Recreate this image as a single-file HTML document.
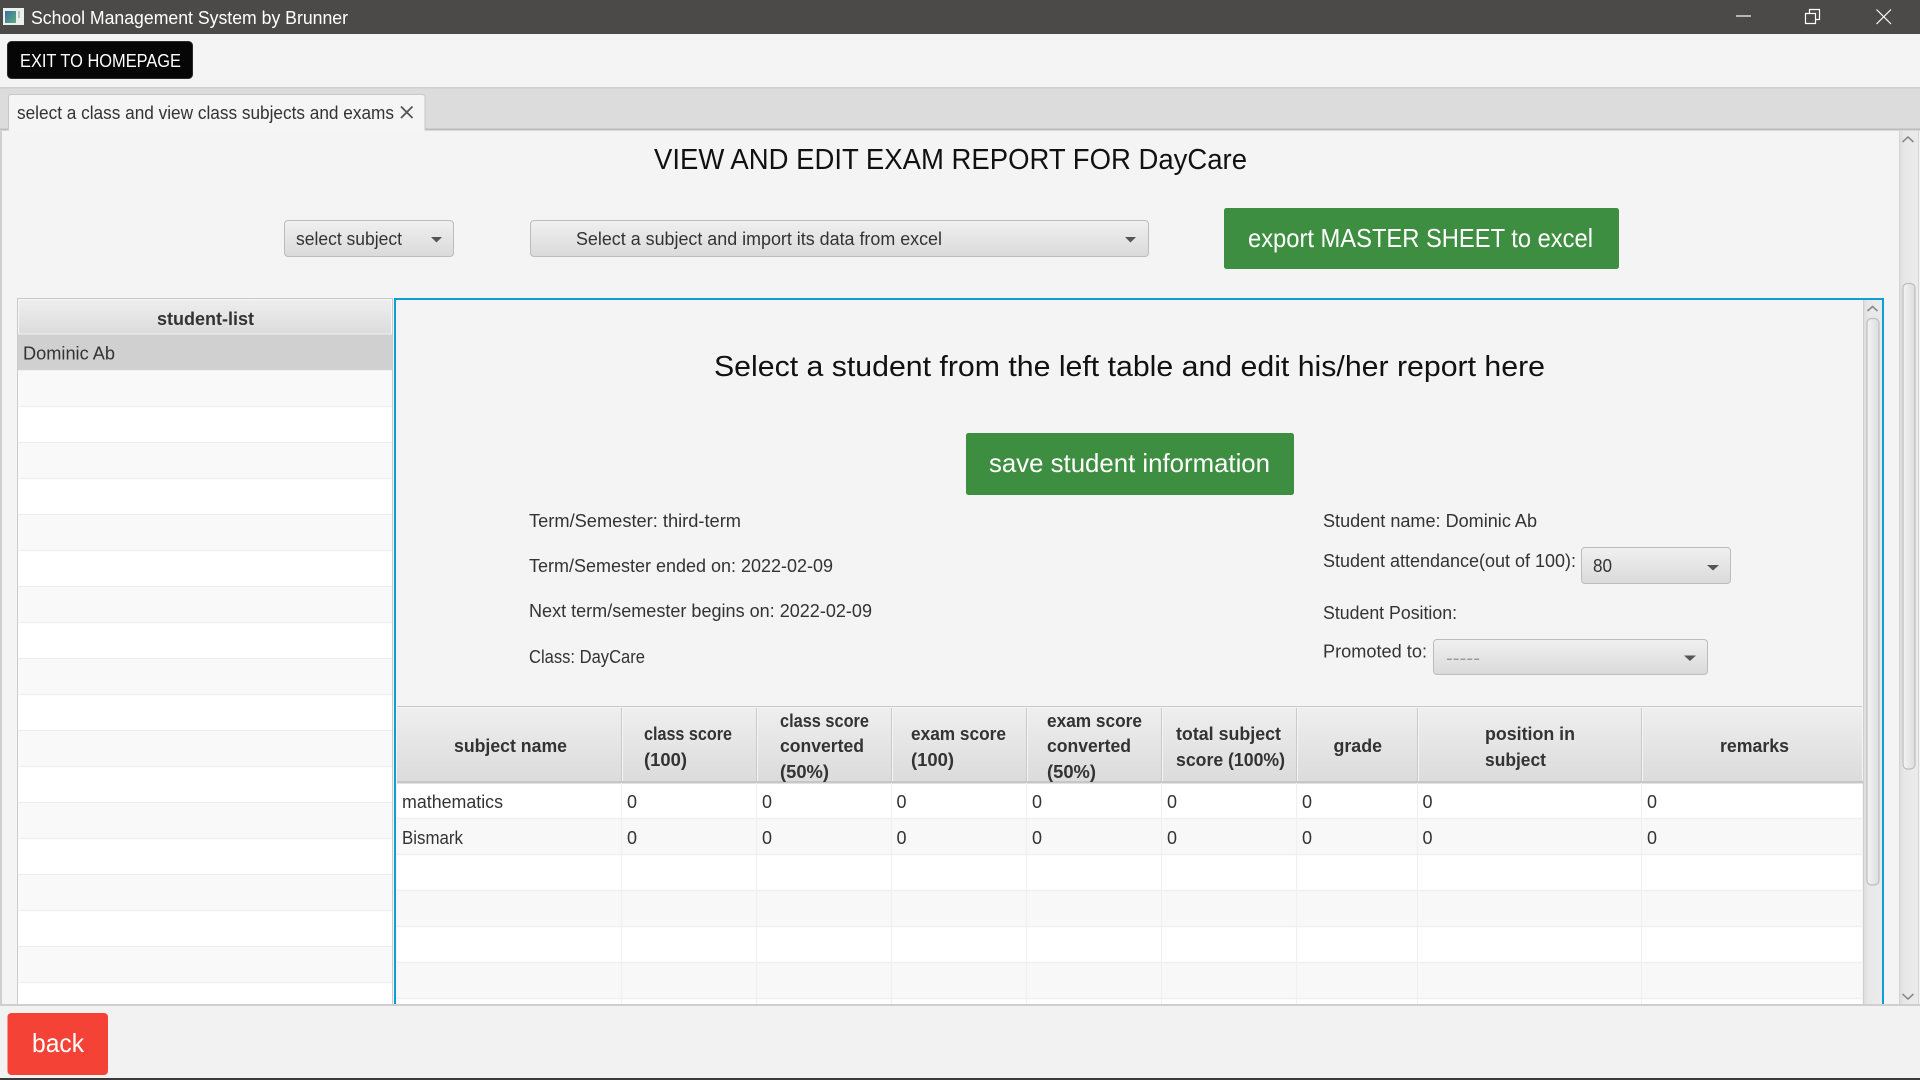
<!DOCTYPE html>
<html><head><meta charset="utf-8"><title>School Management System by Brunner</title>
<style>
html,body{margin:0;padding:0;width:1920px;height:1080px;overflow:hidden;background:#f4f4f4}
svg{display:block}
text{font-family:"Liberation Sans",sans-serif;font-size:18px;fill:#333}
.b{font-weight:bold}
.w{fill:#fff}
.h{font-size:29px;fill:#111}
</style></head><body>
<svg width="1920" height="1080" viewBox="0 0 1920 1080" xmlns="http://www.w3.org/2000/svg">
<defs>
<linearGradient id="btn" x1="0" y1="0" x2="0" y2="1"><stop offset="0" stop-color="#f0f0f0"/><stop offset="1" stop-color="#dadada"/></linearGradient>
<linearGradient id="hd" x1="0" y1="0" x2="0" y2="1"><stop offset="0" stop-color="#efefef"/><stop offset="1" stop-color="#dbdbdb"/></linearGradient>
<linearGradient id="trk" x1="0" y1="0" x2="1" y2="0"><stop offset="0" stop-color="#dcdcdc"/><stop offset=".3" stop-color="#e8e8e8"/><stop offset="1" stop-color="#ebebeb"/></linearGradient>
<linearGradient id="thm" x1="0" y1="0" x2="1" y2="0"><stop offset="0" stop-color="#f4f4f4"/><stop offset="1" stop-color="#dcdcdc"/></linearGradient>
<linearGradient id="ico" x1="0" y1="0" x2="1" y2="1"><stop offset="0" stop-color="#3b6ea5"/><stop offset="1" stop-color="#5fae7a"/></linearGradient>
</defs>

<!-- title bar -->
<rect x="0" y="0" width="1920" height="34" fill="#4c4a48"/>
<rect x="3" y="8" width="21" height="17" fill="#eceff0"/>
<rect x="5" y="11" width="11" height="12" fill="url(#ico)"/>
<rect x="18" y="11" width="2" height="7" fill="#b9c4c8"/>
<text class="w" x="31" y="24" textLength="317" lengthAdjust="spacingAndGlyphs">School Management System by Brunner</text>
<path d="M1736 16H1751" stroke="#fff" stroke-width="1.2"/>
<path d="M1809.5 14V9.5H1819.5V19.5H1815.5" fill="none" stroke="#fff" stroke-width="1.2"/>
<path d="M1805.5 13.5V23.5H1815.5V13.5Z" fill="#4c4a48" stroke="#fff" stroke-width="1.2"/>
<path d="M1876.5 9.5L1891 24M1891 9.5L1876.5 24" stroke="#fff" stroke-width="1.2"/>

<!-- toolbar -->
<rect x="0" y="34" width="1920" height="53" fill="#f4f4f4"/>
<rect x="7.5" y="41.5" width="185" height="37" rx="4" fill="#060606" stroke="#2a2a2a"/>
<text class="w" x="20" y="67" textLength="161" lengthAdjust="spacingAndGlyphs">EXIT TO HOMEPAGE</text>

<!-- tab bar -->
<rect x="0" y="87" width="1920" height="43" fill="#dcdcdc"/>
<rect x="0" y="87" width="1920" height="1.5" fill="#cfcfcf"/>
<rect x="0" y="128.5" width="1920" height="2" fill="#bdbdbd"/>
<path d="M8.5 131V97.5Q8.5 94.5 11.5 94.5H422Q425 94.5 425 97.5V131" fill="#f5f5f5" stroke="#c8c8c8"/>
<text x="17" y="119" textLength="377" lengthAdjust="spacingAndGlyphs">select a class and view class subjects and exams</text>
<path d="M401 106.5L412.5 118M412.5 106.5L401 118" stroke="#555" stroke-width="1.8"/>

<!-- main content -->
<rect x="0" y="130.5" width="1920" height="874" fill="#f4f4f4"/>
<rect x="0" y="131" width="2" height="873" fill="#cfcfcf"/>

<text class="h" x="654" y="169" textLength="593" lengthAdjust="spacingAndGlyphs">VIEW AND EDIT EXAM REPORT FOR DayCare</text>

<rect x="284.5" y="220.5" width="169" height="36" rx="3.5" fill="url(#btn)" stroke="#bcbcbc"/>
<text x="296" y="245" textLength="106" lengthAdjust="spacingAndGlyphs">select subject</text>
<path d="M431 237H442L436.5 242.5Z" fill="#555"/>

<rect x="530.5" y="220.5" width="618" height="36" rx="3.5" fill="url(#btn)" stroke="#bcbcbc"/>
<text x="576" y="245" textLength="366" lengthAdjust="spacingAndGlyphs">Select a subject and import its data from excel</text>
<path d="M1125 237H1136L1130.5 242.5Z" fill="#555"/>

<rect x="1224" y="208" width="395" height="61" rx="2.5" fill="#3e8e41"/>
<text class="w" x="1248" y="247" style="font-size:26px" textLength="345" lengthAdjust="spacingAndGlyphs">export MASTER SHEET to excel</text>

<!-- left table -->
<rect x="17" y="298.5" width="376" height="706" fill="#fff"/>
<rect x="17.5" y="298.5" width="375" height="36.5" fill="url(#hd)" stroke="#c8c8c8"/>
<rect x="18.5" y="299.5" width="373" height="34.5" fill="none" stroke="#f6f6f6"/>
<rect x="18" y="335" width="374" height="36" fill="#d0d0d0"/>
<g fill="#f9f9f9">
<rect x="18" y="371" width="374" height="36"/><rect x="18" y="443" width="374" height="36"/><rect x="18" y="515" width="374" height="36"/><rect x="18" y="587" width="374" height="36"/><rect x="18" y="659" width="374" height="36"/><rect x="18" y="731" width="374" height="36"/><rect x="18" y="803" width="374" height="36"/><rect x="18" y="875" width="374" height="36"/><rect x="18" y="947" width="374" height="36"/>
</g>
<path d="M18 370.5H392M18 406.5H392M18 442.5H392M18 478.5H392M18 514.5H392M18 550.5H392M18 586.5H392M18 622.5H392M18 658.5H392M18 694.5H392M18 730.5H392M18 766.5H392M18 802.5H392M18 838.5H392M18 874.5H392M18 910.5H392M18 946.5H392M18 982.5H392" stroke="#efefef" stroke-width="1.2"/>
<path d="M17.5 335V1004M392.5 335V1004" stroke="#cccccc"/>
<text class="b" x="157" y="325" textLength="97" lengthAdjust="spacingAndGlyphs">student-list</text>
<text x="23" y="359.5" textLength="92" lengthAdjust="spacingAndGlyphs">Dominic Ab</text>

<!-- right panel -->
<path d="M395 1004V299H1883V1004" fill="none" stroke="#0b9fd6" stroke-width="2"/>

<text class="h" x="714" y="376" textLength="831" lengthAdjust="spacingAndGlyphs">Select a student from the left table and edit his/her report here</text>
<rect x="966" y="433" width="328" height="62" rx="2.5" fill="#3e8e41"/>
<text class="w" x="989" y="472" style="font-size:26px" textLength="281" lengthAdjust="spacingAndGlyphs">save student information</text>

<text x="529" y="527" textLength="212" lengthAdjust="spacingAndGlyphs">Term/Semester: third-term</text>
<text x="529" y="572" textLength="304" lengthAdjust="spacingAndGlyphs">Term/Semester ended on: 2022-02-09</text>
<text x="529" y="617" textLength="343" lengthAdjust="spacingAndGlyphs">Next term/semester begins on: 2022-02-09</text>
<text x="529" y="663" textLength="116" lengthAdjust="spacingAndGlyphs">Class: DayCare</text>

<text x="1323" y="527" textLength="214" lengthAdjust="spacingAndGlyphs">Student name: Dominic Ab</text>
<text x="1323" y="567" textLength="253" lengthAdjust="spacingAndGlyphs">Student attendance(out of 100):</text>
<rect x="1581.5" y="547.5" width="149" height="36" rx="3.5" fill="url(#btn)" stroke="#bcbcbc"/>
<text x="1593" y="572" textLength="19" lengthAdjust="spacingAndGlyphs">80</text>
<path d="M1707 565H1719L1713 570.5Z" fill="#555"/>
<text x="1323" y="619" textLength="134" lengthAdjust="spacingAndGlyphs">Student Position:</text>
<text x="1323" y="657.5" textLength="104" lengthAdjust="spacingAndGlyphs">Promoted to:</text>
<rect x="1433.5" y="639.5" width="274" height="35" rx="3.5" fill="url(#btn)" stroke="#bcbcbc"/>
<text x="1446" y="664" style="fill:#999" textLength="34" lengthAdjust="spacingAndGlyphs">-----</text>
<path d="M1684 655.5H1696L1690 661Z" fill="#555"/>

<!-- right table -->
<rect x="397" y="706" width="1465" height="298" fill="#fff"/>
<rect x="397" y="706" width="1465" height="77" fill="url(#hd)"/>
<path d="M397 706.5H1862" stroke="#c8c8c8"/>
<rect x="397" y="781" width="1466" height="2.5" fill="#c6c6c6"/>
<path d="M621.5 706V782M756.5 706V782M891.5 706V782M1026.5 706V782M1161.5 706V782M1296.5 706V782M1417.5 706V782M1641.5 706V782" stroke="#c9c9c9"/>
<path d="M398 707.5H1862M622.5 707V781M757.5 707V781M892.5 707V781M1027.5 707V781M1162.5 707V781M1297.5 707V781M1418.5 707V781M1642.5 707V781" stroke="#f5f5f5"/>
<g fill="#f8f8f8">
<rect x="397" y="819" width="1465" height="36"/><rect x="397" y="891" width="1465" height="36"/><rect x="397" y="963" width="1465" height="36"/>
</g>
<path d="M397 818.5H1862M397 854.5H1862M397 890.5H1862M397 926.5H1862M397 962.5H1862M397 998.5H1862" stroke="#f0f0f0" stroke-width="1.6"/>
<path d="M621.5 783V1004M756.5 783V1004M891.5 783V1004M1026.5 783V1004M1161.5 783V1004M1296.5 783V1004M1417.5 783V1004M1641.5 783V1004" stroke="#f0f0f0" stroke-width="1.2"/>

<text class="b" x="454" y="752" textLength="113" lengthAdjust="spacingAndGlyphs">subject name</text>
<text class="b" x="644" y="740" textLength="88" lengthAdjust="spacingAndGlyphs">class score</text>
<text class="b" x="644" y="766" textLength="43" lengthAdjust="spacingAndGlyphs">(100)</text>
<text class="b" x="780" y="727" textLength="89" lengthAdjust="spacingAndGlyphs">class score</text>
<text class="b" x="780" y="752" textLength="84" lengthAdjust="spacingAndGlyphs">converted</text>
<text class="b" x="780" y="778" textLength="49" lengthAdjust="spacingAndGlyphs">(50%)</text>
<text class="b" x="911" y="740" textLength="95" lengthAdjust="spacingAndGlyphs">exam score</text>
<text class="b" x="911" y="766" textLength="43" lengthAdjust="spacingAndGlyphs">(100)</text>
<text class="b" x="1047" y="727" textLength="95" lengthAdjust="spacingAndGlyphs">exam score</text>
<text class="b" x="1047" y="752" textLength="84" lengthAdjust="spacingAndGlyphs">converted</text>
<text class="b" x="1047" y="778" textLength="49" lengthAdjust="spacingAndGlyphs">(50%)</text>
<text class="b" x="1176" y="740" textLength="105" lengthAdjust="spacingAndGlyphs">total subject</text>
<text class="b" x="1176" y="766" textLength="109" lengthAdjust="spacingAndGlyphs">score (100%)</text>
<text class="b" x="1333.5" y="752" textLength="48.5" lengthAdjust="spacingAndGlyphs">grade</text>
<text class="b" x="1485" y="740" textLength="90" lengthAdjust="spacingAndGlyphs">position in</text>
<text class="b" x="1485" y="766" textLength="61" lengthAdjust="spacingAndGlyphs">subject</text>
<text class="b" x="1720" y="752" textLength="69" lengthAdjust="spacingAndGlyphs">remarks</text>

<text x="402" y="808" textLength="101" lengthAdjust="spacingAndGlyphs">mathematics</text>
<text x="402" y="844" textLength="61" lengthAdjust="spacingAndGlyphs">Bismark</text>
<g>
<text x="627" y="808">0</text><text x="762" y="808">0</text><text x="896.5" y="808">0</text><text x="1032" y="808">0</text><text x="1167" y="808">0</text><text x="1302" y="808">0</text><text x="1422.5" y="808">0</text><text x="1647" y="808">0</text>
<text x="627" y="844">0</text><text x="762" y="844">0</text><text x="896.5" y="844">0</text><text x="1032" y="844">0</text><text x="1167" y="844">0</text><text x="1302" y="844">0</text><text x="1422.5" y="844">0</text><text x="1647" y="844">0</text>
</g>

<!-- inner scrollbar -->
<rect x="1863" y="300" width="19" height="704" fill="url(#trk)"/>
<path d="M1863.5 300V1004" stroke="#cfcfcf"/>
<path d="M1867.5 311L1872.5 306.5L1877.5 311" fill="none" stroke="#8a8a8a" stroke-width="1.6"/>
<rect x="1867" y="318.5" width="12" height="566.5" rx="4.5" fill="url(#thm)" stroke="#bdbdbd" stroke-width="1.2"/>

<!-- outer scrollbar -->
<rect x="1899" y="131" width="19" height="873" fill="url(#trk)"/>
<path d="M1899.5 131V1004M1918.5 131V1004" stroke="#d4d4d4"/>
<path d="M1902.5 142L1908 137L1913.5 142" fill="none" stroke="#8a8a8a" stroke-width="1.6"/>
<path d="M1902.5 994L1908 999L1913.5 994" fill="none" stroke="#8a8a8a" stroke-width="1.6"/>
<rect x="1903" y="283.5" width="12" height="485.5" rx="4.5" fill="url(#thm)" stroke="#bdbdbd" stroke-width="1.2"/>

<!-- bottom bar -->
<rect x="0" y="1005" width="1920" height="73" fill="#f2f2f2"/>
<rect x="0" y="1004" width="1920" height="2" fill="#cfcfcf"/>
<rect x="7.5" y="1013" width="100.5" height="62" rx="4" fill="#f44336"/>
<text class="w" x="32" y="1052" style="font-size:26px" textLength="52" lengthAdjust="spacingAndGlyphs">back</text>
<rect x="0" y="1078" width="1920" height="2" fill="#3a3a3a"/>
</svg>
</body></html>
